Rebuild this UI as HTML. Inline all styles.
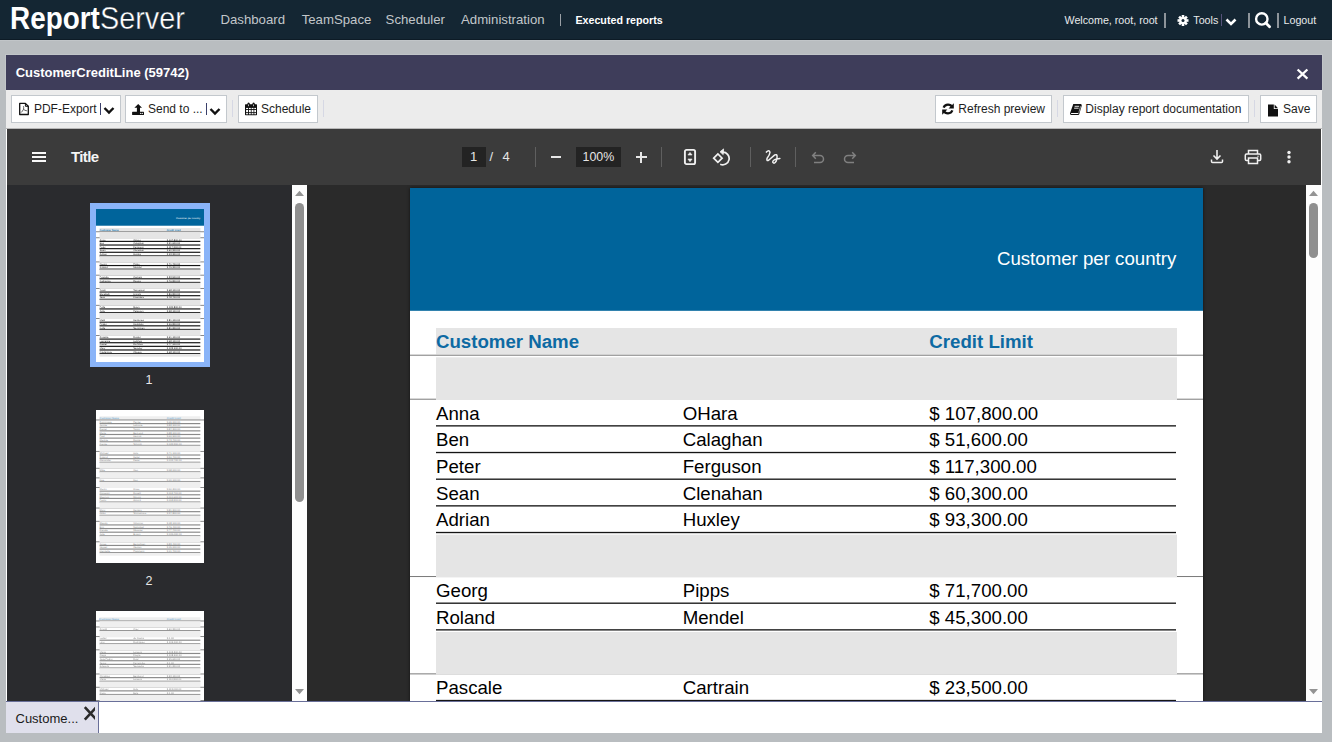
<!DOCTYPE html>
<html><head><meta charset="utf-8"><style>
*{box-sizing:border-box;margin:0;padding:0}
html,body{width:1332px;height:742px;overflow:hidden;background:#b9bdc0;font-family:"Liberation Sans",sans-serif;position:relative}
.r,.t{position:absolute}
.t{white-space:nowrap}
.pg{position:absolute;background:#fff;overflow:hidden}
</style></head><body>
<div class="r" style="left:0px;top:0px;width:1332px;height:40px;background:#142633;"></div>
<div class="r" style="left:0px;top:39px;width:1332px;height:1px;background:#0d1b26;"></div>
<div class="r" style="left:0px;top:40px;width:1332px;height:1px;background:#c1c5c8;"></div>
<div class="t" style="left:10px;top:0px;font-size:31.5px;line-height:36px;color:#fff;font-weight:700;transform:scaleX(0.885);transform-origin:0 0">Report</div>
<div class="t" style="left:100px;top:0px;font-size:31.5px;line-height:36px;color:#fff;-webkit-text-stroke:0.4px #142633;transform:scaleX(0.915);transform-origin:0 0">Server</div>
<div class="t" style="left:220.50px;top:12.83px;font-size:13.2px;line-height:13.2px;color:#c2c6ca;">Dashboard</div>
<div class="t" style="left:301.70px;top:12.83px;font-size:13.2px;line-height:13.2px;color:#c2c6ca;">TeamSpace</div>
<div class="t" style="left:385.60px;top:12.83px;font-size:13.2px;line-height:13.2px;color:#c2c6ca;">Scheduler</div>
<div class="t" style="left:461.00px;top:12.83px;font-size:13.2px;line-height:13.2px;color:#c2c6ca;">Administration</div>
<div class="r" style="left:559.5px;top:14px;width:1px;height:12px;background:#9aa0a6;"></div>
<div class="t" style="left:575.40px;top:15.04px;font-size:10.7px;line-height:10.7px;color:#fff;font-weight:700;">Executed reports</div>
<div class="t" style="left:1064.50px;top:15.34px;font-size:10.7px;line-height:10.7px;color:#e8eaec;">Welcome, root, root</div>
<div class="r" style="left:1164px;top:13px;width:2px;height:15px;background:#8d949a;"></div>
<svg class="r" style="left:1177px;top:15.3px" width="12" height="11" viewBox="0 0 12 11"><g transform="translate(6,5.5)" fill="#fff"><circle r="3.6"/><rect x="-1.3" y="-5.5" width="2.6" height="3" transform="rotate(0)"/><rect x="-1.3" y="-5.5" width="2.6" height="3" transform="rotate(45)"/><rect x="-1.3" y="-5.5" width="2.6" height="3" transform="rotate(90)"/><rect x="-1.3" y="-5.5" width="2.6" height="3" transform="rotate(135)"/><rect x="-1.3" y="-5.5" width="2.6" height="3" transform="rotate(180)"/><rect x="-1.3" y="-5.5" width="2.6" height="3" transform="rotate(225)"/><rect x="-1.3" y="-5.5" width="2.6" height="3" transform="rotate(270)"/><rect x="-1.3" y="-5.5" width="2.6" height="3" transform="rotate(315)"/><circle r="1.5" fill="#142633"/></g></svg>
<div class="t" style="left:1193.30px;top:15.34px;font-size:10.7px;line-height:10.7px;color:#e8eaec;">Tools</div>
<div class="r" style="left:1221px;top:14px;width:1px;height:12px;background:#55527a;"></div>
<svg class="r" style="left:1225px;top:18px" width="12" height="8" viewBox="0 0 12 8"><polyline points="1.5,1.5 6,6 10.5,1.5" fill="none" stroke="#fff" stroke-width="2.6"/></svg>
<div class="r" style="left:1248px;top:13px;width:2px;height:15px;background:#8d949a;"></div>
<svg class="r" style="left:1254px;top:12px" width="18" height="18" viewBox="0 0 18 18"><circle cx="7.8" cy="6.9" r="5.7" fill="none" stroke="#fff" stroke-width="2.4"/><line x1="11.9" y1="11" x2="15.6" y2="14.8" stroke="#fff" stroke-width="2.8" stroke-linecap="round"/></svg>
<div class="r" style="left:1277px;top:13px;width:2px;height:15px;background:#8d949a;"></div>
<div class="t" style="left:1283.50px;top:15.34px;font-size:10.7px;line-height:10.7px;color:#e8eaec;">Logout</div>
<div class="r" style="left:5px;top:54px;width:1318px;height:37px;background:#c1c5c8;"></div>
<div class="r" style="left:6px;top:55px;width:1316px;height:678px;background:#fff;"></div>
<div class="r" style="left:6px;top:55px;width:1316px;height:35px;background:#3e3d5a;"></div>
<div class="t" style="left:15.70px;top:66.00px;font-size:13px;line-height:13px;color:#fff;font-weight:700;">CustomerCreditLine (59742)</div>
<svg class="r" style="left:1296px;top:67.6px" width="13" height="12" viewBox="0 0 13 12"><path d="M1.6,1.5 L11.4,10.7 M11.4,1.5 L1.6,10.7" stroke="#fff" stroke-width="2.3"/></svg>
<div class="r" style="left:6px;top:90px;width:1316px;height:39px;background:#ececec;"></div>
<div class="r" style="left:11px;top:95px;width:110px;height:28px;background:#fff;border:1px solid #c3c8cd"></div>
<div class="r" style="left:125px;top:95px;width:102px;height:28px;background:#fff;border:1px solid #c3c8cd"></div>
<div class="r" style="left:238px;top:95px;width:80px;height:28px;background:#fff;border:1px solid #c3c8cd"></div>
<div class="r" style="left:935px;top:95px;width:117px;height:28px;background:#fff;border:1px solid #c3c8cd"></div>
<div class="r" style="left:1063px;top:95px;width:186px;height:28px;background:#fff;border:1px solid #c3c8cd"></div>
<div class="r" style="left:1260px;top:95px;width:57px;height:28px;background:#fff;border:1px solid #c3c8cd"></div>
<div class="r" style="left:232px;top:100px;width:1px;height:17px;background:#d6d8e4;"></div>
<div class="r" style="left:323px;top:100px;width:1px;height:17px;background:#d6d8e4;"></div>
<div class="r" style="left:1057px;top:100px;width:1px;height:17px;background:#d6d8e4;"></div>
<div class="r" style="left:1254px;top:100px;width:1px;height:17px;background:#d6d8e4;"></div>
<svg class="r" style="left:18px;top:102px" width="12" height="14" viewBox="0 0 12 14"><path d="M1.7,1.4 H7.4 L10.3,4.3 V12.5 H1.7 Z" fill="none" stroke="#111" stroke-width="1.3" stroke-linejoin="round"/><path d="M7.4,1.4 V4.3 H10.3" fill="none" stroke="#111" stroke-width="1"/><path d="M3,10.6 Q4.5,9.3 5.5,7.3 Q6,5.8 5.4,4.2 M5.5,7.3 Q6.8,8.6 8.9,8.8" fill="none" stroke="#222" stroke-width="0.7"/></svg>
<div class="t" style="left:33.90px;top:102.84px;font-size:12px;line-height:12px;color:#1e1e1e;">PDF-Export</div>
<div class="r" style="left:100px;top:103px;width:1px;height:12px;background:#3a3f6a;"></div>
<svg class="r" style="left:103px;top:106px" width="12" height="9" viewBox="0 0 12 9"><polyline points="1.5,2 6,6.5 10.5,2" fill="none" stroke="#111" stroke-width="2.4"/></svg>
<svg class="r" style="left:131px;top:103px" width="14" height="13" viewBox="0 0 14 13"><path d="M7.2,0.9 L11,4.7 H9 V9.5 H5.9 V4.7 H3.4 Z" fill="#111"/><rect x="1.1" y="8.8" width="11.9" height="3.1" rx="0.5" fill="#111"/><circle cx="9.7" cy="10.4" r="0.6" fill="#fff"/><circle cx="11.3" cy="10.4" r="0.6" fill="#fff"/></svg>
<div class="t" style="left:148.00px;top:102.84px;font-size:12px;line-height:12px;color:#1e1e1e;">Send to ...</div>
<div class="r" style="left:206px;top:103px;width:1px;height:12px;background:#3a3f6a;"></div>
<svg class="r" style="left:209px;top:107px" width="12" height="9" viewBox="0 0 12 9"><polyline points="1.5,2 6,6.5 10.5,2" fill="none" stroke="#111" stroke-width="2.4"/></svg>
<svg class="r" style="left:244px;top:102px" width="14" height="14" viewBox="0 0 14 14"><rect x="1" y="2.2" width="12" height="11" rx="0.6" fill="#111"/><rect x="2.1" y="5.9" width="2.0" height="1.2" fill="#fff"/><rect x="2.1" y="8.0" width="2.0" height="2.2" fill="#fff"/><rect x="2.1" y="11.1" width="2.0" height="1.2" fill="#fff"/><rect x="5.0" y="5.9" width="1.8" height="1.2" fill="#fff"/><rect x="5.0" y="8.0" width="1.8" height="2.2" fill="#fff"/><rect x="5.0" y="11.1" width="1.8" height="1.2" fill="#fff"/><rect x="7.6" y="5.9" width="1.9" height="1.2" fill="#fff"/><rect x="7.6" y="8.0" width="1.9" height="2.2" fill="#fff"/><rect x="7.6" y="11.1" width="1.9" height="1.2" fill="#fff"/><rect x="10.3" y="5.9" width="1.7" height="1.2" fill="#fff"/><rect x="10.3" y="8.0" width="1.7" height="2.2" fill="#fff"/><rect x="10.3" y="11.1" width="1.7" height="1.2" fill="#fff"/><ellipse cx="4.6" cy="2.8" rx="1.3" ry="2.2" fill="#111"/><ellipse cx="9.6" cy="2.8" rx="1.3" ry="2.2" fill="#111"/><ellipse cx="4.6" cy="3.3" rx="0.45" ry="1.1" fill="#ddd"/><ellipse cx="9.6" cy="3.3" rx="0.45" ry="1.1" fill="#ddd"/></svg>
<div class="t" style="left:261.00px;top:102.84px;font-size:12px;line-height:12px;color:#1e1e1e;">Schedule</div>
<svg class="r" style="left:941px;top:102px" width="14" height="14" viewBox="0 0 14 14"><path d="M11.3,5.2 A4.8,4.8 0 0 0 2.6,5.6" fill="none" stroke="#111" stroke-width="2.2"/><path d="M12.8,1.2 V6.4 H7.6 Z" fill="#111"/><path d="M2.7,8.8 A4.8,4.8 0 0 0 11.4,8.4" fill="none" stroke="#111" stroke-width="2.2"/><path d="M1.2,12.8 V7.6 H6.4 Z" fill="#111"/></svg>
<div class="t" style="left:958.30px;top:102.84px;font-size:12px;line-height:12px;color:#1e1e1e;">Refresh preview</div>
<svg class="r" style="left:1069px;top:103px" width="14" height="13" viewBox="0 0 14 13"><path d="M4.3,0.9 H12.2 L12.8,2.6 L10.2,11.3 Q10,12 9.2,12 H2.2 Q0.8,11.8 1,10.3 Z" fill="#111"/><path d="M2.2,9.9 H9.6 L9.2,11.1 H2.3 Q1.6,10.5 2.2,9.9 Z" fill="#fff"/><path d="M11.6,3.3 L9.8,9.6" stroke="#fff" stroke-width="0.6"/><path d="M5.6,3.3 H10.2 M5.1,5.2 H9.6" stroke="#fff" stroke-width="0.9"/></svg>
<div class="t" style="left:1085.30px;top:102.84px;font-size:12px;line-height:12px;color:#1e1e1e;">Display report documentation</div>
<svg class="r" style="left:1267px;top:103.5px" width="12" height="13" viewBox="0 0 12 13"><path d="M1,0.5 H6.8 V5 H11 V12.5 H1 Z" fill="#111"/><path d="M7.6,0.5 L11,4.2 H7.6 Z" fill="#111"/></svg>
<div class="t" style="left:1283.00px;top:102.84px;font-size:12px;line-height:12px;color:#1e1e1e;">Save</div>
<div class="r" style="left:6px;top:128px;width:1316px;height:1px;background:#b8b8b8;"></div>
<div class="r" style="left:7px;top:129px;width:1314px;height:56px;background:#3b3b3b;"></div>
<div class="r" style="left:32px;top:152px;width:14px;height:2px;background:#f8f8f8;"></div>
<div class="r" style="left:32px;top:156px;width:14px;height:2px;background:#f8f8f8;"></div>
<div class="r" style="left:32px;top:160px;width:14px;height:2px;background:#f8f8f8;"></div>
<div class="t" style="left:71.00px;top:149.30px;font-size:15px;line-height:15px;color:#f5f5f5;font-weight:700;letter-spacing:-0.6px">Title</div>
<div class="r" style="left:462px;top:147px;width:24px;height:20px;background:#232323;"></div>
<div class="t" style="left:470.00px;top:150.00px;font-size:13px;line-height:13px;color:#e6e6e6;">1</div>
<div class="t" style="left:489.50px;top:150.00px;font-size:13px;line-height:13px;color:#e6e6e6;">/</div>
<div class="t" style="left:502.50px;top:150.00px;font-size:13px;line-height:13px;color:#e6e6e6;">4</div>
<div class="r" style="left:535px;top:147px;width:1px;height:20px;background:#5f5f5f;"></div>
<div class="r" style="left:661px;top:147px;width:1px;height:20px;background:#5f5f5f;"></div>
<div class="r" style="left:750px;top:147px;width:1px;height:20px;background:#5f5f5f;"></div>
<div class="r" style="left:795px;top:147px;width:1px;height:20px;background:#5f5f5f;"></div>
<div class="r" style="left:551px;top:156px;width:10px;height:2px;background:#e6e6e6;"></div>
<div class="r" style="left:576px;top:147px;width:45px;height:20px;background:#232323;"></div>
<div class="t" style="left:582.50px;top:150.50px;font-size:12.4px;line-height:12.4px;color:#e6e6e6;">100%</div>
<div class="r" style="left:635.5px;top:156px;width:11px;height:2px;background:#e6e6e6;"></div>
<div class="r" style="left:640px;top:151.5px;width:2px;height:11px;background:#e6e6e6;"></div>
<svg class="r" style="left:683px;top:148px" width="14" height="18" viewBox="0 0 14 18"><rect x="1.9" y="1.9" width="10.2" height="14.2" rx="1.6" fill="none" stroke="#f0f0f0" stroke-width="1.9"/><path d="M4.9,7 L7,4.4 L9.1,7 Z M4.9,11 L7,13.8 L9.1,11 Z" fill="#f0f0f0" stroke="#f0f0f0" stroke-width="0.6" stroke-linejoin="round"/></svg>
<svg class="r" style="left:712px;top:148px" width="20" height="18" viewBox="0 0 20 18"><path d="M1.7,10.2 L5.9,6 L10.1,10.2 L5.9,14.4 Z" fill="none" stroke="#f0f0f0" stroke-width="1.7" stroke-linejoin="miter"/><path d="M10.5,4.2 A6.3,6.3 0 1 1 8.2,16.2" fill="none" stroke="#f0f0f0" stroke-width="1.7"/><path d="M8,3.8 L11.6,0.9 L11.2,6.6 Z" fill="#f0f0f0" stroke="#f0f0f0" stroke-width="0.8" stroke-linejoin="round"/></svg>
<svg class="r" style="left:764px;top:149px" width="18" height="17" viewBox="0 0 18 17"><path d="M2.4,3.1 Q5,0.3 6,3.3 Q5.8,5.8 3.1,9.3 Q2.2,12.3 4.6,11.2 L10.8,5.9 Q14.6,4.6 12.2,12.2 Q10.3,15.6 8.7,13.2 Q8.3,10.3 15.9,9.4" fill="none" stroke="#f0f0f0" stroke-width="1.5" stroke-linecap="round" stroke-linejoin="round"/></svg>
<svg class="r" style="left:811px;top:151px" width="14" height="13" viewBox="0 0 14 13"><path d="M4.8,1.3 L1.7,4.5 L4.8,7.7 M1.7,4.5 H9 A3.5,3.5 0 0 1 9,11.5 H3" fill="none" stroke="#808080" stroke-width="1.5"/></svg>
<svg class="r" style="left:843px;top:151px" width="14" height="13" viewBox="0 0 14 13"><path d="M9.2,1.3 L12.3,4.5 L9.2,7.7 M12.3,4.5 H5 A3.5,3.5 0 0 0 5,11.5 H11" fill="none" stroke="#808080" stroke-width="1.5"/></svg>
<svg class="r" style="left:1210px;top:149px" width="14" height="15" viewBox="0 0 14 15"><path d="M7,1 V10 M3.5,6.5 L7,10 L10.5,6.5" fill="none" stroke="#f0f0f0" stroke-width="1.6"/><path d="M1.5,10.5 V12.5 Q1.5,13.5 2.5,13.5 H11.5 Q12.5,13.5 12.5,12.5 V10.5" fill="none" stroke="#f0f0f0" stroke-width="1.5"/></svg>
<svg class="r" style="left:1244px;top:149px" width="18" height="16" viewBox="0 0 18 16"><path d="M4.5,5 V1.5 H13.5 V5" fill="none" stroke="#f0f0f0" stroke-width="1.5"/><path d="M4.5,11.5 H2.5 Q1.3,11.5 1.3,10.3 V6.2 Q1.3,5 2.5,5 H15.5 Q16.7,5 16.7,6.2 V10.3 Q16.7,11.5 15.5,11.5 H13.5" fill="none" stroke="#f0f0f0" stroke-width="1.5"/><rect x="4.5" y="9" width="9" height="5.5" fill="none" stroke="#f0f0f0" stroke-width="1.5"/><circle cx="14" cy="7.2" r="0.7" fill="#f0f0f0"/></svg>
<svg class="r" style="left:1287px;top:150px" width="4" height="14" viewBox="0 0 4 14"><circle cx="2" cy="2.5" r="1.7" fill="#f0f0f0"/><circle cx="2" cy="7" r="1.7" fill="#f0f0f0"/><circle cx="2" cy="11.7" r="1.7" fill="#f0f0f0"/></svg>
<div class="r" style="left:7px;top:185px;width:285px;height:516px;background:#2a2b2e;"></div>
<div style="position:absolute;left:0;top:0;width:292px;height:701px;overflow:hidden">
<div class="r" style="left:90px;top:203px;width:120px;height:164px;background:#8ab4f8;"></div>
<div class="pg" style="left:96px;top:209px;width:108px;height:152.8px"><div style="position:absolute;left:0;top:0;width:793px;height:1122px;transform:scale(0.136192);transform-origin:0 0;text-rendering:geometricPrecision"><svg style="position:absolute;left:0;top:0" width="793" height="1122" viewBox="0 0 793 1122" shape-rendering="geometricPrecision"><rect x="0.00" y="0.00" width="793.00" height="122.80" fill="#00649b"/><rect x="26.00" y="140.00" width="741.00" height="26.30" fill="#e5e5e5"/><rect x="0.00" y="163.95" width="793.00" height="6.50" fill="#7a7a7a"/><rect x="0.00" y="207.95" width="793.00" height="6.50" fill="#7a7a7a"/><rect x="26.00" y="169.30" width="741.00" height="45.45" fill="#e5e5e5"/><rect x="26.00" y="233.51" width="740.00" height="8.64" fill="#151515"/><rect x="26.00" y="260.18" width="740.00" height="8.64" fill="#151515"/><rect x="26.00" y="286.85" width="740.00" height="8.64" fill="#151515"/><rect x="26.00" y="313.51" width="740.00" height="8.64" fill="#151515"/><rect x="26.00" y="340.18" width="740.00" height="8.64" fill="#151515"/><rect x="0.00" y="385.28" width="793.00" height="6.50" fill="#7a7a7a"/><rect x="26.00" y="346.63" width="741.00" height="45.45" fill="#e5e5e5"/><rect x="26.00" y="410.85" width="740.00" height="8.64" fill="#151515"/><rect x="26.00" y="437.51" width="740.00" height="8.64" fill="#151515"/><rect x="0.00" y="482.62" width="793.00" height="6.50" fill="#7a7a7a"/><rect x="26.00" y="443.97" width="741.00" height="45.45" fill="#e5e5e5"/><rect x="26.00" y="508.18" width="740.00" height="8.64" fill="#151515"/><rect x="26.00" y="534.85" width="740.00" height="8.64" fill="#151515"/><rect x="0.00" y="579.95" width="793.00" height="6.50" fill="#7a7a7a"/><rect x="26.00" y="541.30" width="741.00" height="45.45" fill="#e5e5e5"/><rect x="26.00" y="605.51" width="740.00" height="8.64" fill="#151515"/><rect x="26.00" y="632.18" width="740.00" height="8.64" fill="#151515"/><rect x="26.00" y="658.85" width="740.00" height="8.64" fill="#151515"/><rect x="0.00" y="703.95" width="793.00" height="6.50" fill="#7a7a7a"/><rect x="26.00" y="665.30" width="741.00" height="45.45" fill="#e5e5e5"/><rect x="26.00" y="729.51" width="740.00" height="8.64" fill="#151515"/><rect x="26.00" y="756.18" width="740.00" height="8.64" fill="#151515"/><rect x="0.00" y="801.28" width="793.00" height="6.50" fill="#7a7a7a"/><rect x="26.00" y="762.63" width="741.00" height="45.45" fill="#e5e5e5"/><rect x="26.00" y="826.85" width="740.00" height="8.64" fill="#151515"/><rect x="26.00" y="853.51" width="740.00" height="8.64" fill="#151515"/><rect x="26.00" y="880.18" width="740.00" height="8.64" fill="#151515"/><rect x="0.00" y="925.28" width="793.00" height="6.50" fill="#7a7a7a"/><rect x="26.00" y="886.63" width="741.00" height="45.45" fill="#e5e5e5"/><rect x="26.00" y="950.85" width="740.00" height="8.64" fill="#151515"/><rect x="26.00" y="977.51" width="740.00" height="8.64" fill="#151515"/><rect x="26.00" y="1004.18" width="740.00" height="8.64" fill="#151515"/><rect x="26.00" y="1030.85" width="740.00" height="8.64" fill="#151515"/><rect x="26.00" y="1057.51" width="740.00" height="8.64" fill="#151515"/><rect x="26.00" y="1063.97" width="741.00" height="20.00" fill="#e5e5e5"/></svg><div class="t" style="right:26.70px;top:61.90px;font-size:18.67px;line-height:18.67px;color:#fff;">Customer per country</div>
<div class="t" style="left:26.00px;top:144.60px;font-size:18.67px;line-height:18.67px;color:#2b7fb5;font-weight:700;">Customer Name</div>
<div class="t" style="left:519.30px;top:144.60px;font-size:18.67px;line-height:18.67px;color:#2b7fb5;font-weight:700;">Credit Limit</div>
<div class="t" style="left:26.00px;top:216.67px;font-size:18.67px;line-height:18.67px;color:#222;">Anna</div>
<div class="t" style="left:272.70px;top:216.67px;font-size:18.67px;line-height:18.67px;color:#222;">OHara</div>
<div class="t" style="left:519.30px;top:216.67px;font-size:18.67px;line-height:18.67px;color:#222;">$ 107,800.00</div>
<div class="t" style="left:26.00px;top:243.33px;font-size:18.67px;line-height:18.67px;color:#222;">Ben</div>
<div class="t" style="left:272.70px;top:243.33px;font-size:18.67px;line-height:18.67px;color:#222;">Calaghan</div>
<div class="t" style="left:519.30px;top:243.33px;font-size:18.67px;line-height:18.67px;color:#222;">$ 51,600.00</div>
<div class="t" style="left:26.00px;top:270.00px;font-size:18.67px;line-height:18.67px;color:#222;">Peter</div>
<div class="t" style="left:272.70px;top:270.00px;font-size:18.67px;line-height:18.67px;color:#222;">Ferguson</div>
<div class="t" style="left:519.30px;top:270.00px;font-size:18.67px;line-height:18.67px;color:#222;">$ 117,300.00</div>
<div class="t" style="left:26.00px;top:296.67px;font-size:18.67px;line-height:18.67px;color:#222;">Sean</div>
<div class="t" style="left:272.70px;top:296.67px;font-size:18.67px;line-height:18.67px;color:#222;">Clenahan</div>
<div class="t" style="left:519.30px;top:296.67px;font-size:18.67px;line-height:18.67px;color:#222;">$ 60,300.00</div>
<div class="t" style="left:26.00px;top:323.33px;font-size:18.67px;line-height:18.67px;color:#222;">Adrian</div>
<div class="t" style="left:272.70px;top:323.33px;font-size:18.67px;line-height:18.67px;color:#222;">Huxley</div>
<div class="t" style="left:519.30px;top:323.33px;font-size:18.67px;line-height:18.67px;color:#222;">$ 93,300.00</div>
<div class="t" style="left:26.00px;top:394.00px;font-size:18.67px;line-height:18.67px;color:#222;">Georg</div>
<div class="t" style="left:272.70px;top:394.00px;font-size:18.67px;line-height:18.67px;color:#222;">Pipps</div>
<div class="t" style="left:519.30px;top:394.00px;font-size:18.67px;line-height:18.67px;color:#222;">$ 71,700.00</div>
<div class="t" style="left:26.00px;top:420.67px;font-size:18.67px;line-height:18.67px;color:#222;">Roland</div>
<div class="t" style="left:272.70px;top:420.67px;font-size:18.67px;line-height:18.67px;color:#222;">Mendel</div>
<div class="t" style="left:519.30px;top:420.67px;font-size:18.67px;line-height:18.67px;color:#222;">$ 45,300.00</div>
<div class="t" style="left:26.00px;top:491.33px;font-size:18.67px;line-height:18.67px;color:#222;">Pascale</div>
<div class="t" style="left:272.70px;top:491.33px;font-size:18.67px;line-height:18.67px;color:#222;">Cartrain</div>
<div class="t" style="left:519.30px;top:491.33px;font-size:18.67px;line-height:18.67px;color:#222;">$ 23,500.00</div>
<div class="t" style="left:26.00px;top:518.00px;font-size:18.67px;line-height:18.67px;color:#222;">Catherine</div>
<div class="t" style="left:272.70px;top:518.00px;font-size:18.67px;line-height:18.67px;color:#222;">Dewey</div>
<div class="t" style="left:519.30px;top:518.00px;font-size:18.67px;line-height:18.67px;color:#222;">$ 76,800.00</div>
<div class="t" style="left:26.00px;top:588.67px;font-size:18.67px;line-height:18.67px;color:#222;">Yoshi</div>
<div class="t" style="left:272.70px;top:588.67px;font-size:18.67px;line-height:18.67px;color:#222;">Tannamuri</div>
<div class="t" style="left:519.30px;top:588.67px;font-size:18.67px;line-height:18.67px;color:#222;">$ 68,100.00</div>
<div class="t" style="left:26.00px;top:615.33px;font-size:18.67px;line-height:18.67px;color:#222;">Elizabeth</div>
<div class="t" style="left:272.70px;top:615.33px;font-size:18.67px;line-height:18.67px;color:#222;">Lincoln</div>
<div class="t" style="left:519.30px;top:615.33px;font-size:18.67px;line-height:18.67px;color:#222;">$ 86,800.00</div>
<div class="t" style="left:26.00px;top:642.00px;font-size:18.67px;line-height:18.67px;color:#222;">Jean</div>
<div class="t" style="left:272.70px;top:642.00px;font-size:18.67px;line-height:18.67px;color:#222;">Fresnière</div>
<div class="t" style="left:519.30px;top:642.00px;font-size:18.67px;line-height:18.67px;color:#222;">$ 48,700.00</div>
<div class="t" style="left:26.00px;top:712.67px;font-size:18.67px;line-height:18.67px;color:#222;">Palle</div>
<div class="t" style="left:272.70px;top:712.67px;font-size:18.67px;line-height:18.67px;color:#222;">Ibsen</div>
<div class="t" style="left:519.30px;top:712.67px;font-size:18.67px;line-height:18.67px;color:#222;">$ 120,800.00</div>
<div class="t" style="left:26.00px;top:739.33px;font-size:18.67px;line-height:18.67px;color:#222;">Jytte</div>
<div class="t" style="left:272.70px;top:739.33px;font-size:18.67px;line-height:18.67px;color:#222;">Petersen</div>
<div class="t" style="left:519.30px;top:739.33px;font-size:18.67px;line-height:18.67px;color:#222;">$ 58,100.00</div>
<div class="t" style="left:26.00px;top:810.00px;font-size:18.67px;line-height:18.67px;color:#222;">Matti</div>
<div class="t" style="left:272.70px;top:810.00px;font-size:18.67px;line-height:18.67px;color:#222;">Karttunen</div>
<div class="t" style="left:519.30px;top:810.00px;font-size:18.67px;line-height:18.67px;color:#222;">$ 81,100.00</div>
<div class="t" style="left:26.00px;top:836.67px;font-size:18.67px;line-height:18.67px;color:#222;">Pirkko</div>
<div class="t" style="left:272.70px;top:836.67px;font-size:18.67px;line-height:18.67px;color:#222;">Koskitalo</div>
<div class="t" style="left:519.30px;top:836.67px;font-size:18.67px;line-height:18.67px;color:#222;">$ 96,800.00</div>
<div class="t" style="left:26.00px;top:863.33px;font-size:18.67px;line-height:18.67px;color:#222;">Kalle</div>
<div class="t" style="left:272.70px;top:863.33px;font-size:18.67px;line-height:18.67px;color:#222;">Suominen</div>
<div class="t" style="left:519.30px;top:863.33px;font-size:18.67px;line-height:18.67px;color:#222;">$ 81,200.00</div>
<div class="t" style="left:26.00px;top:934.00px;font-size:18.67px;line-height:18.67px;color:#222;">Annette</div>
<div class="t" style="left:272.70px;top:934.00px;font-size:18.67px;line-height:18.67px;color:#222;">Roulet</div>
<div class="t" style="left:519.30px;top:934.00px;font-size:18.67px;line-height:18.67px;color:#222;">$ 61,100.00</div>
<div class="t" style="left:26.00px;top:960.67px;font-size:18.67px;line-height:18.67px;color:#222;">Laurence</div>
<div class="t" style="left:272.70px;top:960.67px;font-size:18.67px;line-height:18.67px;color:#222;">Lebihan</div>
<div class="t" style="left:519.30px;top:960.67px;font-size:18.67px;line-height:18.67px;color:#222;">$ 68,100.00</div>
<div class="t" style="left:26.00px;top:987.33px;font-size:18.67px;line-height:18.67px;color:#222;">Daniel</div>
<div class="t" style="left:272.70px;top:987.33px;font-size:18.67px;line-height:18.67px;color:#222;">Da Silva</div>
<div class="t" style="left:519.30px;top:987.33px;font-size:18.67px;line-height:18.67px;color:#222;">$ 77,900.00</div>
<div class="t" style="left:26.00px;top:1014.00px;font-size:18.67px;line-height:18.67px;color:#222;">Mary</div>
<div class="t" style="left:272.70px;top:1014.00px;font-size:18.67px;line-height:18.67px;color:#222;">Saveley</div>
<div class="t" style="left:519.30px;top:1014.00px;font-size:18.67px;line-height:18.67px;color:#222;">$ 123,900.00</div>
<div class="t" style="left:26.00px;top:1040.67px;font-size:18.67px;line-height:18.67px;color:#222;">Frédérique</div>
<div class="t" style="left:272.70px;top:1040.67px;font-size:18.67px;line-height:18.67px;color:#222;">Citeaux</div>
<div class="t" style="left:519.30px;top:1040.67px;font-size:18.67px;line-height:18.67px;color:#222;">$ 68,100.00</div></div></div>
<div class="t" style="left:145.50px;top:374.42px;font-size:12.5px;line-height:12.5px;color:#e8e8e8;">1</div>
<div class="pg" style="left:96px;top:410px;width:108px;height:152.8px"><div style="position:absolute;left:0;top:0;width:793px;height:1122px;transform:scale(0.136192);transform-origin:0 0;text-rendering:geometricPrecision"><svg style="position:absolute;left:0;top:0" width="793" height="1122" viewBox="0 0 793 1122" shape-rendering="geometricPrecision"><rect x="26.00" y="46.00" width="741.00" height="26.30" fill="#efefef"/><rect x="0.00" y="69.95" width="793.00" height="6.50" fill="#7a7a7a"/><rect x="26.00" y="95.51" width="740.00" height="8.64" fill="#8a8a8a"/><rect x="26.00" y="122.18" width="740.00" height="8.64" fill="#8a8a8a"/><rect x="26.00" y="148.85" width="740.00" height="8.64" fill="#8a8a8a"/><rect x="26.00" y="175.51" width="740.00" height="8.64" fill="#8a8a8a"/><rect x="26.00" y="202.18" width="740.00" height="8.64" fill="#8a8a8a"/><rect x="26.00" y="228.85" width="740.00" height="8.64" fill="#8a8a8a"/><rect x="26.00" y="255.51" width="740.00" height="8.64" fill="#8a8a8a"/><rect x="0.00" y="300.62" width="793.00" height="6.50" fill="#7a7a7a"/><rect x="26.00" y="261.97" width="741.00" height="45.45" fill="#efefef"/><rect x="26.00" y="326.18" width="740.00" height="8.64" fill="#8a8a8a"/><rect x="26.00" y="352.85" width="740.00" height="8.64" fill="#8a8a8a"/><rect x="26.00" y="379.51" width="740.00" height="8.64" fill="#8a8a8a"/><rect x="0.00" y="424.62" width="793.00" height="6.50" fill="#7a7a7a"/><rect x="26.00" y="385.97" width="741.00" height="45.45" fill="#efefef"/><rect x="26.00" y="450.18" width="740.00" height="8.64" fill="#8a8a8a"/><rect x="0.00" y="495.28" width="793.00" height="6.50" fill="#7a7a7a"/><rect x="26.00" y="456.63" width="741.00" height="45.45" fill="#efefef"/><rect x="26.00" y="520.85" width="740.00" height="8.64" fill="#8a8a8a"/><rect x="0.00" y="565.95" width="793.00" height="6.50" fill="#7a7a7a"/><rect x="26.00" y="527.30" width="741.00" height="45.45" fill="#efefef"/><rect x="26.00" y="591.51" width="740.00" height="8.64" fill="#8a8a8a"/><rect x="26.00" y="618.18" width="740.00" height="8.64" fill="#8a8a8a"/><rect x="26.00" y="644.85" width="740.00" height="8.64" fill="#8a8a8a"/><rect x="26.00" y="671.51" width="740.00" height="8.64" fill="#8a8a8a"/><rect x="0.00" y="716.62" width="793.00" height="6.50" fill="#7a7a7a"/><rect x="26.00" y="677.97" width="741.00" height="45.45" fill="#efefef"/><rect x="26.00" y="742.18" width="740.00" height="8.64" fill="#8a8a8a"/><rect x="26.00" y="768.85" width="740.00" height="8.64" fill="#8a8a8a"/><rect x="0.00" y="813.95" width="793.00" height="6.50" fill="#7a7a7a"/><rect x="26.00" y="775.30" width="741.00" height="45.45" fill="#efefef"/><rect x="26.00" y="839.51" width="740.00" height="8.64" fill="#8a8a8a"/><rect x="26.00" y="866.18" width="740.00" height="8.64" fill="#8a8a8a"/><rect x="26.00" y="892.85" width="740.00" height="8.64" fill="#8a8a8a"/><rect x="26.00" y="919.51" width="740.00" height="8.64" fill="#8a8a8a"/><rect x="0.00" y="964.62" width="793.00" height="6.50" fill="#7a7a7a"/><rect x="26.00" y="925.97" width="741.00" height="45.45" fill="#efefef"/><rect x="26.00" y="990.18" width="740.00" height="8.64" fill="#8a8a8a"/><rect x="26.00" y="1016.85" width="740.00" height="8.64" fill="#8a8a8a"/><rect x="26.00" y="1043.51" width="740.00" height="8.64" fill="#8a8a8a"/><rect x="26.00" y="1049.97" width="741.00" height="20.00" fill="#efefef"/></svg><div class="t" style="left:26.00px;top:50.60px;font-size:18.67px;line-height:18.67px;color:#7fb3d6;font-weight:700;">Customer Name</div>
<div class="t" style="left:519.30px;top:50.60px;font-size:18.67px;line-height:18.67px;color:#7fb3d6;font-weight:700;">Credit Limit</div>
<div class="t" style="left:26.00px;top:78.67px;font-size:18.67px;line-height:18.67px;color:#888;">Dominique</div>
<div class="t" style="left:272.70px;top:78.67px;font-size:18.67px;line-height:18.67px;color:#888;">Perrier</div>
<div class="t" style="left:519.30px;top:78.67px;font-size:18.67px;line-height:18.67px;color:#888;">$ 65,000.00</div>
<div class="t" style="left:26.00px;top:105.33px;font-size:18.67px;line-height:18.67px;color:#888;">Janine</div>
<div class="t" style="left:272.70px;top:105.33px;font-size:18.67px;line-height:18.67px;color:#888;">Labrune</div>
<div class="t" style="left:519.30px;top:105.33px;font-size:18.67px;line-height:18.67px;color:#888;">$ 82,900.00</div>
<div class="t" style="left:26.00px;top:132.00px;font-size:18.67px;line-height:18.67px;color:#888;">Daniel</div>
<div class="t" style="left:272.70px;top:132.00px;font-size:18.67px;line-height:18.67px;color:#888;">Tonini</div>
<div class="t" style="left:519.30px;top:132.00px;font-size:18.67px;line-height:18.67px;color:#888;">$ 84,300.00</div>
<div class="t" style="left:26.00px;top:158.67px;font-size:18.67px;line-height:18.67px;color:#888;">Marie</div>
<div class="t" style="left:272.70px;top:158.67px;font-size:18.67px;line-height:18.67px;color:#888;">Bertrand</div>
<div class="t" style="left:519.30px;top:158.67px;font-size:18.67px;line-height:18.67px;color:#888;">$ 88,900.00</div>
<div class="t" style="left:26.00px;top:185.33px;font-size:18.67px;line-height:18.67px;color:#888;">Paul</div>
<div class="t" style="left:272.70px;top:185.33px;font-size:18.67px;line-height:18.67px;color:#888;">Henriot</div>
<div class="t" style="left:519.30px;top:185.33px;font-size:18.67px;line-height:18.67px;color:#888;">$ 69,500.00</div>
<div class="t" style="left:26.00px;top:212.00px;font-size:18.67px;line-height:18.67px;color:#888;">Martine</div>
<div class="t" style="left:272.70px;top:212.00px;font-size:18.67px;line-height:18.67px;color:#888;">Rancé</div>
<div class="t" style="left:519.30px;top:212.00px;font-size:18.67px;line-height:18.67px;color:#888;">$ 73,700.00</div>
<div class="t" style="left:26.00px;top:238.67px;font-size:18.67px;line-height:18.67px;color:#888;">Carine</div>
<div class="t" style="left:272.70px;top:238.67px;font-size:18.67px;line-height:18.67px;color:#888;">Schmitt</div>
<div class="t" style="left:519.30px;top:238.67px;font-size:18.67px;line-height:18.67px;color:#888;">$ 123,300.00</div>
<div class="t" style="left:26.00px;top:309.33px;font-size:18.67px;line-height:18.67px;color:#888;">Michael</div>
<div class="t" style="left:272.70px;top:309.33px;font-size:18.67px;line-height:18.67px;color:#888;">Holz</div>
<div class="t" style="left:519.30px;top:309.33px;font-size:18.67px;line-height:18.67px;color:#888;">$ 71,100.00</div>
<div class="t" style="left:26.00px;top:336.00px;font-size:18.67px;line-height:18.67px;color:#888;">Roland</div>
<div class="t" style="left:272.70px;top:336.00px;font-size:18.67px;line-height:18.67px;color:#888;">Keitel</div>
<div class="t" style="left:519.30px;top:336.00px;font-size:18.67px;line-height:18.67px;color:#888;">$ 59,700.00</div>
<div class="t" style="left:26.00px;top:362.67px;font-size:18.67px;line-height:18.67px;color:#888;">Alexander</div>
<div class="t" style="left:272.70px;top:362.67px;font-size:18.67px;line-height:18.67px;color:#888;">Feuer</div>
<div class="t" style="left:519.30px;top:362.67px;font-size:18.67px;line-height:18.67px;color:#888;">$ 102,400.00</div>
<div class="t" style="left:26.00px;top:433.33px;font-size:18.67px;line-height:18.67px;color:#888;">Mike</div>
<div class="t" style="left:272.70px;top:433.33px;font-size:18.67px;line-height:18.67px;color:#888;">Gao</div>
<div class="t" style="left:519.30px;top:433.33px;font-size:18.67px;line-height:18.67px;color:#888;">$ 58,000.00</div>
<div class="t" style="left:26.00px;top:504.00px;font-size:18.67px;line-height:18.67px;color:#888;">Kee</div>
<div class="t" style="left:272.70px;top:504.00px;font-size:18.67px;line-height:18.67px;color:#888;">Kuo</div>
<div class="t" style="left:519.30px;top:504.00px;font-size:18.67px;line-height:18.67px;color:#888;">$ 90,100.00</div>
<div class="t" style="left:26.00px;top:574.67px;font-size:18.67px;line-height:18.67px;color:#888;">Martin</div>
<div class="t" style="left:272.70px;top:574.67px;font-size:18.67px;line-height:18.67px;color:#888;">Kloss</div>
<div class="t" style="left:519.30px;top:574.67px;font-size:18.67px;line-height:18.67px;color:#888;">$ 50,200.00</div>
<div class="t" style="left:26.00px;top:601.33px;font-size:18.67px;line-height:18.67px;color:#888;">Giovanni</div>
<div class="t" style="left:272.70px;top:601.33px;font-size:18.67px;line-height:18.67px;color:#888;">Rovelli</div>
<div class="t" style="left:519.30px;top:601.33px;font-size:18.67px;line-height:18.67px;color:#888;">$ 112,700.00</div>
<div class="t" style="left:26.00px;top:628.00px;font-size:18.67px;line-height:18.67px;color:#888;">Maurizio</div>
<div class="t" style="left:272.70px;top:628.00px;font-size:18.67px;line-height:18.67px;color:#888;">Moroni</div>
<div class="t" style="left:519.30px;top:628.00px;font-size:18.67px;line-height:18.67px;color:#888;">$ 119,600.00</div>
<div class="t" style="left:26.00px;top:654.67px;font-size:18.67px;line-height:18.67px;color:#888;">Paolo</div>
<div class="t" style="left:272.70px;top:654.67px;font-size:18.67px;line-height:18.67px;color:#888;">Accorti</div>
<div class="t" style="left:519.30px;top:654.67px;font-size:18.67px;line-height:18.67px;color:#888;">$ 118,200.00</div>
<div class="t" style="left:26.00px;top:725.33px;font-size:18.67px;line-height:18.67px;color:#888;">Mory</div>
<div class="t" style="left:272.70px;top:725.33px;font-size:18.67px;line-height:18.67px;color:#888;">Kentary</div>
<div class="t" style="left:519.30px;top:725.33px;font-size:18.67px;line-height:18.67px;color:#888;">$ 81,200.00</div>
<div class="t" style="left:26.00px;top:752.00px;font-size:18.67px;line-height:18.67px;color:#888;">Akiko</div>
<div class="t" style="left:272.70px;top:752.00px;font-size:18.67px;line-height:18.67px;color:#888;">Shimamura</div>
<div class="t" style="left:519.30px;top:752.00px;font-size:18.67px;line-height:18.67px;color:#888;">$ 34,800.00</div>
<div class="t" style="left:26.00px;top:822.67px;font-size:18.67px;line-height:18.67px;color:#888;">Wendy</div>
<div class="t" style="left:272.70px;top:822.67px;font-size:18.67px;line-height:18.67px;color:#888;">Victorino</div>
<div class="t" style="left:519.30px;top:822.67px;font-size:18.67px;line-height:18.67px;color:#888;">$ 98,100.00</div>
<div class="t" style="left:26.00px;top:849.33px;font-size:18.67px;line-height:18.67px;color:#888;">Eric</div>
<div class="t" style="left:272.70px;top:849.33px;font-size:18.67px;line-height:18.67px;color:#888;">Natividad</div>
<div class="t" style="left:519.30px;top:849.33px;font-size:18.67px;line-height:18.67px;color:#888;">$ 76,400.00</div>
<div class="t" style="left:26.00px;top:876.00px;font-size:18.67px;line-height:18.67px;color:#888;">Renate</div>
<div class="t" style="left:272.70px;top:876.00px;font-size:18.67px;line-height:18.67px;color:#888;">Messner</div>
<div class="t" style="left:519.30px;top:876.00px;font-size:18.67px;line-height:18.67px;color:#888;">$ 77,700.00</div>
<div class="t" style="left:26.00px;top:902.67px;font-size:18.67px;line-height:18.67px;color:#888;">Julie</div>
<div class="t" style="left:272.70px;top:902.67px;font-size:18.67px;line-height:18.67px;color:#888;">Brown</div>
<div class="t" style="left:519.30px;top:902.67px;font-size:18.67px;line-height:18.67px;color:#888;">$ 105,000.00</div>
<div class="t" style="left:26.00px;top:973.33px;font-size:18.67px;line-height:18.67px;color:#888;">Jonas</div>
<div class="t" style="left:272.70px;top:973.33px;font-size:18.67px;line-height:18.67px;color:#888;">Bergulfsen</div>
<div class="t" style="left:519.30px;top:973.33px;font-size:18.67px;line-height:18.67px;color:#888;">$ 83,400.00</div>
<div class="t" style="left:26.00px;top:1000.00px;font-size:18.67px;line-height:18.67px;color:#888;">Veysel</div>
<div class="t" style="left:272.70px;top:1000.00px;font-size:18.67px;line-height:18.67px;color:#888;">Oeztan</div>
<div class="t" style="left:519.30px;top:1000.00px;font-size:18.67px;line-height:18.67px;color:#888;">$ 95,000.00</div>
<div class="t" style="left:26.00px;top:1026.67px;font-size:18.67px;line-height:18.67px;color:#888;">Henriette</div>
<div class="t" style="left:272.70px;top:1026.67px;font-size:18.67px;line-height:18.67px;color:#888;">Pfalzheim</div>
<div class="t" style="left:519.30px;top:1026.67px;font-size:18.67px;line-height:18.67px;color:#888;">$ 91,700.00</div></div></div>
<div class="t" style="left:145.50px;top:575.42px;font-size:12.5px;line-height:12.5px;color:#e8e8e8;">2</div>
<div class="pg" style="left:96px;top:611px;width:108px;height:152.8px"><div style="position:absolute;left:0;top:0;width:793px;height:1122px;transform:scale(0.136192);transform-origin:0 0;text-rendering:geometricPrecision"><svg style="position:absolute;left:0;top:0" width="793" height="1122" viewBox="0 0 793 1122" shape-rendering="geometricPrecision"><rect x="26.00" y="46.00" width="741.00" height="26.30" fill="#efefef"/><rect x="0.00" y="69.95" width="793.00" height="6.50" fill="#7a7a7a"/><rect x="0.00" y="113.95" width="793.00" height="6.50" fill="#7a7a7a"/><rect x="26.00" y="75.30" width="741.00" height="45.45" fill="#efefef"/><rect x="26.00" y="139.51" width="740.00" height="8.64" fill="#8a8a8a"/><rect x="0.00" y="184.62" width="793.00" height="6.50" fill="#7a7a7a"/><rect x="26.00" y="145.97" width="741.00" height="45.45" fill="#efefef"/><rect x="26.00" y="210.18" width="740.00" height="8.64" fill="#8a8a8a"/><rect x="26.00" y="236.85" width="740.00" height="8.64" fill="#8a8a8a"/><rect x="0.00" y="281.95" width="793.00" height="6.50" fill="#7a7a7a"/><rect x="26.00" y="243.30" width="741.00" height="45.45" fill="#efefef"/><rect x="26.00" y="307.51" width="740.00" height="8.64" fill="#8a8a8a"/><rect x="26.00" y="334.18" width="740.00" height="8.64" fill="#8a8a8a"/><rect x="26.00" y="360.85" width="740.00" height="8.64" fill="#8a8a8a"/><rect x="26.00" y="387.51" width="740.00" height="8.64" fill="#8a8a8a"/><rect x="26.00" y="414.18" width="740.00" height="8.64" fill="#8a8a8a"/><rect x="0.00" y="459.28" width="793.00" height="6.50" fill="#7a7a7a"/><rect x="26.00" y="420.63" width="741.00" height="45.45" fill="#efefef"/><rect x="26.00" y="484.85" width="740.00" height="8.64" fill="#8a8a8a"/><rect x="26.00" y="511.51" width="740.00" height="8.64" fill="#8a8a8a"/><rect x="0.00" y="556.62" width="793.00" height="6.50" fill="#7a7a7a"/><rect x="26.00" y="517.97" width="741.00" height="45.45" fill="#efefef"/><rect x="26.00" y="582.18" width="740.00" height="8.64" fill="#8a8a8a"/><rect x="26.00" y="608.85" width="740.00" height="8.64" fill="#8a8a8a"/><rect x="0.00" y="653.95" width="793.00" height="6.50" fill="#7a7a7a"/><rect x="26.00" y="615.30" width="741.00" height="45.45" fill="#efefef"/><rect x="26.00" y="679.51" width="740.00" height="8.64" fill="#8a8a8a"/><rect x="26.00" y="685.97" width="741.00" height="20.00" fill="#efefef"/></svg><div class="t" style="left:26.00px;top:50.60px;font-size:18.67px;line-height:18.67px;color:#7fb3d6;font-weight:700;">Customer Name</div>
<div class="t" style="left:519.30px;top:50.60px;font-size:18.67px;line-height:18.67px;color:#7fb3d6;font-weight:700;">Credit Limit</div>
<div class="t" style="left:26.00px;top:122.67px;font-size:18.67px;line-height:18.67px;color:#888;">Arnold</div>
<div class="t" style="left:272.70px;top:122.67px;font-size:18.67px;line-height:18.67px;color:#888;">Cruz</div>
<div class="t" style="left:519.30px;top:122.67px;font-size:18.67px;line-height:18.67px;color:#888;">$ 60,300.00</div>
<div class="t" style="left:26.00px;top:193.33px;font-size:18.67px;line-height:18.67px;color:#888;">Isabel</div>
<div class="t" style="left:272.70px;top:193.33px;font-size:18.67px;line-height:18.67px;color:#888;">de Castro</div>
<div class="t" style="left:519.30px;top:193.33px;font-size:18.67px;line-height:18.67px;color:#888;">$ 0.00</div>
<div class="t" style="left:26.00px;top:220.00px;font-size:18.67px;line-height:18.67px;color:#888;">Lino</div>
<div class="t" style="left:272.70px;top:220.00px;font-size:18.67px;line-height:18.67px;color:#888;">Rodriguez</div>
<div class="t" style="left:519.30px;top:220.00px;font-size:18.67px;line-height:18.67px;color:#888;">$ 105,000.00</div>
<div class="t" style="left:26.00px;top:290.67px;font-size:18.67px;line-height:18.67px;color:#888;">Maria</div>
<div class="t" style="left:272.70px;top:290.67px;font-size:18.67px;line-height:18.67px;color:#888;">Larsson</div>
<div class="t" style="left:519.30px;top:290.67px;font-size:18.67px;line-height:18.67px;color:#888;">$ 102,200.00</div>
<div class="t" style="left:26.00px;top:317.33px;font-size:18.67px;line-height:18.67px;color:#888;">Diego</div>
<div class="t" style="left:272.70px;top:317.33px;font-size:18.67px;line-height:18.67px;color:#888;">Freyre</div>
<div class="t" style="left:519.30px;top:317.33px;font-size:18.67px;line-height:18.67px;color:#888;">$ 108,500.00</div>
<div class="t" style="left:26.00px;top:344.00px;font-size:18.67px;line-height:18.67px;color:#888;">Jose Pedro</div>
<div class="t" style="left:272.70px;top:344.00px;font-size:18.67px;line-height:18.67px;color:#888;">Roel</div>
<div class="t" style="left:519.30px;top:344.00px;font-size:18.67px;line-height:18.67px;color:#888;">$ 95,600.00</div>
<div class="t" style="left:26.00px;top:370.67px;font-size:18.67px;line-height:18.67px;color:#888;">Jesus</div>
<div class="t" style="left:272.70px;top:370.67px;font-size:18.67px;line-height:18.67px;color:#888;">Fernandez</div>
<div class="t" style="left:519.30px;top:370.67px;font-size:18.67px;line-height:18.67px;color:#888;">$ 0.00</div>
<div class="t" style="left:26.00px;top:397.33px;font-size:18.67px;line-height:18.67px;color:#888;">Eduardo</div>
<div class="t" style="left:272.70px;top:397.33px;font-size:18.67px;line-height:18.67px;color:#888;">Saavedra</div>
<div class="t" style="left:519.30px;top:397.33px;font-size:18.67px;line-height:18.67px;color:#888;">$ 51,200.00</div>
<div class="t" style="left:26.00px;top:468.00px;font-size:18.67px;line-height:18.67px;color:#888;">Christina</div>
<div class="t" style="left:272.70px;top:468.00px;font-size:18.67px;line-height:18.67px;color:#888;">Berglund</div>
<div class="t" style="left:519.30px;top:468.00px;font-size:18.67px;line-height:18.67px;color:#888;">$ 53,100.00</div>
<div class="t" style="left:26.00px;top:494.67px;font-size:18.67px;line-height:18.67px;color:#888;">Maria</div>
<div class="t" style="left:272.70px;top:494.67px;font-size:18.67px;line-height:18.67px;color:#888;">Larsson</div>
<div class="t" style="left:519.30px;top:494.67px;font-size:18.67px;line-height:18.67px;color:#888;">$ 110,800.00</div>
<div class="t" style="left:26.00px;top:565.33px;font-size:18.67px;line-height:18.67px;color:#888;">Michael</div>
<div class="t" style="left:272.70px;top:565.33px;font-size:18.67px;line-height:18.67px;color:#888;">Holz</div>
<div class="t" style="left:519.30px;top:565.33px;font-size:18.67px;line-height:18.67px;color:#888;">$ 113,000.00</div>
<div class="t" style="left:26.00px;top:592.00px;font-size:18.67px;line-height:18.67px;color:#888;">Rene</div>
<div class="t" style="left:272.70px;top:592.00px;font-size:18.67px;line-height:18.67px;color:#888;">Bula</div>
<div class="t" style="left:519.30px;top:592.00px;font-size:18.67px;line-height:18.67px;color:#888;">$ 0.00</div>
<div class="t" style="left:26.00px;top:662.67px;font-size:18.67px;line-height:18.67px;color:#888;">Elizabeth</div>
<div class="t" style="left:272.70px;top:662.67px;font-size:18.67px;line-height:18.67px;color:#888;">Devon</div>
<div class="t" style="left:519.30px;top:662.67px;font-size:18.67px;line-height:18.67px;color:#888;">$ 93,900.00</div></div></div>
</div>
<div class="r" style="left:292px;top:185px;width:15px;height:516px;background:#fdfdfd;"></div>
<svg class="r" style="left:295px;top:190px" width="9" height="7" viewBox="0 0 9 7"><path d="M0,6 L4.5,0.7 L9,6 Z" fill="#939393"/></svg>
<div class="r" style="left:295px;top:203px;width:9px;height:299px;background:#8f8f8f;border-radius:4.5px"></div>
<svg class="r" style="left:295px;top:688px" width="9" height="7" viewBox="0 0 9 7"><path d="M0,1 L4.5,6.3 L9,1 Z" fill="#939393"/></svg>
<div class="r" style="left:307px;top:185px;width:999px;height:516px;background:#2a2a2a;"></div>
<div style="position:absolute;left:307px;top:185px;width:999px;height:516px;overflow:hidden"><div class="pg" style="left:103px;top:3px;width:793px;height:1122px;box-shadow:0 0 3px rgba(0,0,0,0.6)"><svg style="position:absolute;left:0;top:0" width="793" height="1122" viewBox="0 0 793 1122" shape-rendering="geometricPrecision"><rect x="0.00" y="0.00" width="793.00" height="122.80" fill="#00649b"/><rect x="26.00" y="140.00" width="741.00" height="26.30" fill="#e5e5e5"/><rect x="0.00" y="166.70" width="793.00" height="1.00" fill="#7a7a7a"/><rect x="0.00" y="210.70" width="793.00" height="1.00" fill="#7a7a7a"/><rect x="26.00" y="169.30" width="741.00" height="42.70" fill="#e5e5e5"/><rect x="26.00" y="237.20" width="740.00" height="1.33" fill="#151515"/><rect x="26.00" y="263.86" width="740.00" height="1.33" fill="#151515"/><rect x="26.00" y="290.53" width="740.00" height="1.33" fill="#151515"/><rect x="26.00" y="317.20" width="740.00" height="1.33" fill="#151515"/><rect x="26.00" y="343.86" width="740.00" height="1.33" fill="#151515"/><rect x="0.00" y="388.03" width="793.00" height="1.00" fill="#7a7a7a"/><rect x="26.00" y="346.63" width="741.00" height="42.70" fill="#e5e5e5"/><rect x="26.00" y="414.53" width="740.00" height="1.33" fill="#151515"/><rect x="26.00" y="441.20" width="740.00" height="1.33" fill="#151515"/><rect x="0.00" y="485.37" width="793.00" height="1.00" fill="#7a7a7a"/><rect x="26.00" y="443.97" width="741.00" height="42.70" fill="#e5e5e5"/><rect x="26.00" y="511.86" width="740.00" height="1.33" fill="#151515"/><rect x="26.00" y="538.53" width="740.00" height="1.33" fill="#151515"/><rect x="0.00" y="582.70" width="793.00" height="1.00" fill="#7a7a7a"/><rect x="26.00" y="541.30" width="741.00" height="42.70" fill="#e5e5e5"/><rect x="26.00" y="609.20" width="740.00" height="1.33" fill="#151515"/><rect x="26.00" y="635.86" width="740.00" height="1.33" fill="#151515"/><rect x="26.00" y="662.53" width="740.00" height="1.33" fill="#151515"/><rect x="0.00" y="706.70" width="793.00" height="1.00" fill="#7a7a7a"/><rect x="26.00" y="665.30" width="741.00" height="42.70" fill="#e5e5e5"/><rect x="26.00" y="733.20" width="740.00" height="1.33" fill="#151515"/><rect x="26.00" y="759.86" width="740.00" height="1.33" fill="#151515"/><rect x="26.00" y="762.63" width="741.00" height="20.00" fill="#e5e5e5"/></svg><div class="t" style="right:26.70px;top:61.90px;font-size:18.67px;line-height:18.67px;color:#fff;">Customer per country</div>
<div class="t" style="left:26.00px;top:144.60px;font-size:18.67px;line-height:18.67px;color:#0d6aa3;font-weight:700;">Customer Name</div>
<div class="t" style="left:519.30px;top:144.60px;font-size:18.67px;line-height:18.67px;color:#0d6aa3;font-weight:700;">Credit Limit</div>
<div class="t" style="left:26.00px;top:216.67px;font-size:18.67px;line-height:18.67px;color:#000;">Anna</div>
<div class="t" style="left:272.70px;top:216.67px;font-size:18.67px;line-height:18.67px;color:#000;">OHara</div>
<div class="t" style="left:519.30px;top:216.67px;font-size:18.67px;line-height:18.67px;color:#000;">$ 107,800.00</div>
<div class="t" style="left:26.00px;top:243.33px;font-size:18.67px;line-height:18.67px;color:#000;">Ben</div>
<div class="t" style="left:272.70px;top:243.33px;font-size:18.67px;line-height:18.67px;color:#000;">Calaghan</div>
<div class="t" style="left:519.30px;top:243.33px;font-size:18.67px;line-height:18.67px;color:#000;">$ 51,600.00</div>
<div class="t" style="left:26.00px;top:270.00px;font-size:18.67px;line-height:18.67px;color:#000;">Peter</div>
<div class="t" style="left:272.70px;top:270.00px;font-size:18.67px;line-height:18.67px;color:#000;">Ferguson</div>
<div class="t" style="left:519.30px;top:270.00px;font-size:18.67px;line-height:18.67px;color:#000;">$ 117,300.00</div>
<div class="t" style="left:26.00px;top:296.67px;font-size:18.67px;line-height:18.67px;color:#000;">Sean</div>
<div class="t" style="left:272.70px;top:296.67px;font-size:18.67px;line-height:18.67px;color:#000;">Clenahan</div>
<div class="t" style="left:519.30px;top:296.67px;font-size:18.67px;line-height:18.67px;color:#000;">$ 60,300.00</div>
<div class="t" style="left:26.00px;top:323.33px;font-size:18.67px;line-height:18.67px;color:#000;">Adrian</div>
<div class="t" style="left:272.70px;top:323.33px;font-size:18.67px;line-height:18.67px;color:#000;">Huxley</div>
<div class="t" style="left:519.30px;top:323.33px;font-size:18.67px;line-height:18.67px;color:#000;">$ 93,300.00</div>
<div class="t" style="left:26.00px;top:394.00px;font-size:18.67px;line-height:18.67px;color:#000;">Georg</div>
<div class="t" style="left:272.70px;top:394.00px;font-size:18.67px;line-height:18.67px;color:#000;">Pipps</div>
<div class="t" style="left:519.30px;top:394.00px;font-size:18.67px;line-height:18.67px;color:#000;">$ 71,700.00</div>
<div class="t" style="left:26.00px;top:420.67px;font-size:18.67px;line-height:18.67px;color:#000;">Roland</div>
<div class="t" style="left:272.70px;top:420.67px;font-size:18.67px;line-height:18.67px;color:#000;">Mendel</div>
<div class="t" style="left:519.30px;top:420.67px;font-size:18.67px;line-height:18.67px;color:#000;">$ 45,300.00</div>
<div class="t" style="left:26.00px;top:491.33px;font-size:18.67px;line-height:18.67px;color:#000;">Pascale</div>
<div class="t" style="left:272.70px;top:491.33px;font-size:18.67px;line-height:18.67px;color:#000;">Cartrain</div>
<div class="t" style="left:519.30px;top:491.33px;font-size:18.67px;line-height:18.67px;color:#000;">$ 23,500.00</div>
<div class="t" style="left:26.00px;top:518.00px;font-size:18.67px;line-height:18.67px;color:#000;">Catherine</div>
<div class="t" style="left:272.70px;top:518.00px;font-size:18.67px;line-height:18.67px;color:#000;">Dewey</div>
<div class="t" style="left:519.30px;top:518.00px;font-size:18.67px;line-height:18.67px;color:#000;">$ 76,800.00</div>
<div class="t" style="left:26.00px;top:588.67px;font-size:18.67px;line-height:18.67px;color:#000;">Yoshi</div>
<div class="t" style="left:272.70px;top:588.67px;font-size:18.67px;line-height:18.67px;color:#000;">Tannamuri</div>
<div class="t" style="left:519.30px;top:588.67px;font-size:18.67px;line-height:18.67px;color:#000;">$ 68,100.00</div>
<div class="t" style="left:26.00px;top:615.33px;font-size:18.67px;line-height:18.67px;color:#000;">Elizabeth</div>
<div class="t" style="left:272.70px;top:615.33px;font-size:18.67px;line-height:18.67px;color:#000;">Lincoln</div>
<div class="t" style="left:519.30px;top:615.33px;font-size:18.67px;line-height:18.67px;color:#000;">$ 86,800.00</div>
<div class="t" style="left:26.00px;top:642.00px;font-size:18.67px;line-height:18.67px;color:#000;">Jean</div>
<div class="t" style="left:272.70px;top:642.00px;font-size:18.67px;line-height:18.67px;color:#000;">Fresnière</div>
<div class="t" style="left:519.30px;top:642.00px;font-size:18.67px;line-height:18.67px;color:#000;">$ 48,700.00</div>
<div class="t" style="left:26.00px;top:712.67px;font-size:18.67px;line-height:18.67px;color:#000;">Palle</div>
<div class="t" style="left:272.70px;top:712.67px;font-size:18.67px;line-height:18.67px;color:#000;">Ibsen</div>
<div class="t" style="left:519.30px;top:712.67px;font-size:18.67px;line-height:18.67px;color:#000;">$ 120,800.00</div>
<div class="t" style="left:26.00px;top:739.33px;font-size:18.67px;line-height:18.67px;color:#000;">Jytte</div>
<div class="t" style="left:272.70px;top:739.33px;font-size:18.67px;line-height:18.67px;color:#000;">Petersen</div>
<div class="t" style="left:519.30px;top:739.33px;font-size:18.67px;line-height:18.67px;color:#000;">$ 58,100.00</div></div></div>
<div class="r" style="left:1306px;top:185px;width:15px;height:516px;background:#fdfdfd;"></div>
<svg class="r" style="left:1309px;top:190px" width="9" height="7" viewBox="0 0 9 7"><path d="M0,6 L4.5,0.7 L9,6 Z" fill="#939393"/></svg>
<div class="r" style="left:1309px;top:203px;width:9px;height:55px;background:#8f8f8f;border-radius:4.5px"></div>
<svg class="r" style="left:1309px;top:688px" width="9" height="7" viewBox="0 0 9 7"><path d="M0,1 L4.5,6.3 L9,1 Z" fill="#939393"/></svg>
<div class="r" style="left:6px;top:701px;width:1316px;height:1px;background:#696f99;"></div>
<div class="r" style="left:6px;top:702px;width:92px;height:31px;background:#e0e0ec;"></div>
<div class="r" style="left:98px;top:702px;width:1px;height:31px;background:#696f99;"></div>
<div class="t" style="left:15.50px;top:711.80px;font-size:13px;line-height:13px;color:#1a1a1a;">Custome...</div>
<svg class="r" style="left:83px;top:705px" width="12" height="16" viewBox="0 0 12 16"><path d="M1.8,2.2 L13.4,14.6 M13.4,2.2 L1.8,14.6" stroke="#2a2a2a" stroke-width="2.6"/></svg>
</body></html>
